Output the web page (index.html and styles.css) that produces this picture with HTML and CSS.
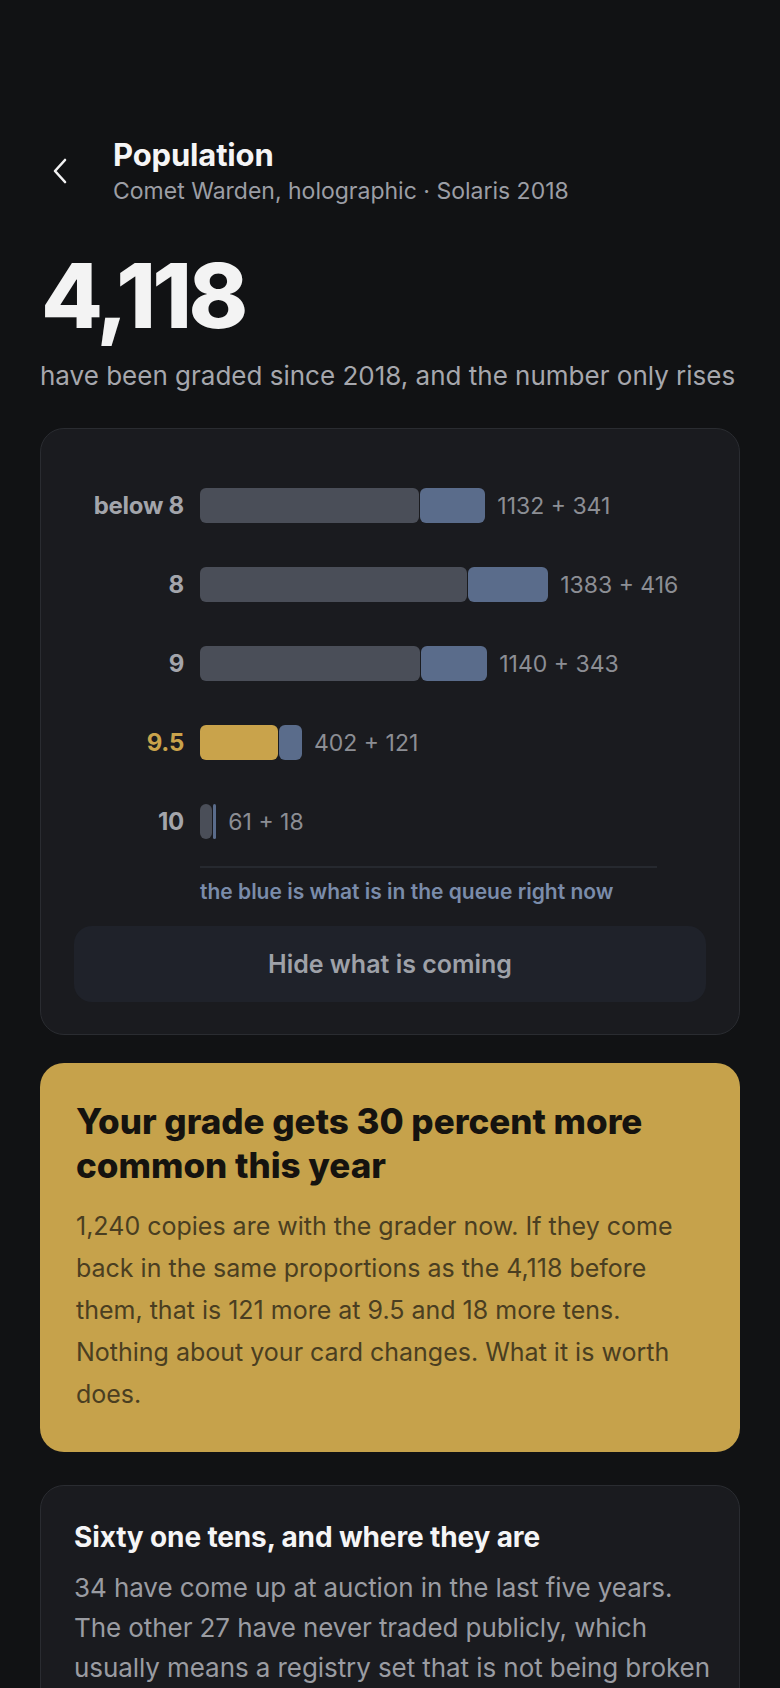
FILE: index.html
```html
<!DOCTYPE html>
<html lang="en">
<head>
<meta charset="utf-8">
<title>Population</title>
<link rel="stylesheet" href="styles.css">
</head>
<body>
<main class="page">
  <header class="header">
    <button class="back" aria-label="Back">
      <svg width="16" height="26" viewBox="0 0 16 26" fill="none"><path d="M13 2 L3 13 L13 24" stroke="#f2f2f3" stroke-width="2.6" stroke-linecap="round" stroke-linejoin="round"/></svg>
    </button>
    <div class="titles">
      <h1 class="title">Population</h1>
      <p class="subtitle">Comet Warden, holographic · Solaris 2018</p>
    </div>
  </header>

  <section class="hero">
    <div class="big">4,118</div>
    <p class="lead">have been graded since 2018, and the number only rises</p>
  </section>

  <section class="card chart-card">
    <div class="chart">
      <div class="row">
        <span class="label">below 8</span>
        <div class="bar">
          <span class="seg gray" style="width:218.5px"></span>
          <span class="seg blue" style="width:65.8px"></span>
          <span class="count">1132 + 341</span>
        </div>
      </div>
      <div class="row">
        <span class="label">8</span>
        <div class="bar">
          <span class="seg gray" style="width:266.9px"></span>
          <span class="seg blue" style="width:80.3px"></span>
          <span class="count">1383 + 416</span>
        </div>
      </div>
      <div class="row">
        <span class="label">9</span>
        <div class="bar">
          <span class="seg gray" style="width:220px"></span>
          <span class="seg blue" style="width:66.2px"></span>
          <span class="count">1140 + 343</span>
        </div>
      </div>
      <div class="row">
        <span class="label gold-text">9.5</span>
        <div class="bar">
          <span class="seg gold" style="width:77.6px"></span>
          <span class="seg blue" style="width:23.4px"></span>
          <span class="count">402 + 121</span>
        </div>
      </div>
      <div class="row">
        <span class="label">10</span>
        <div class="bar">
          <span class="seg gray" style="width:11.8px"></span>
          <span class="seg blue thin" style="width:3.5px"></span>
          <span class="count">61 + 18</span>
        </div>
      </div>
    </div>
    <div class="legend-wrap">
      <div class="divider"></div>
      <p class="legend">the blue is what is in the queue right now</p>
    </div>
    <button class="toggle">Hide what is coming</button>
  </section>

  <section class="callout">
    <h2 class="callout-title">Your grade gets 30 percent more common this year</h2>
    <p class="callout-body">1,240 copies are with the grader now. If they come back in the same proportions as the 4,118 before them, that is 121 more at 9.5 and 18 more tens. Nothing about your card changes. What it is worth does.</p>
  </section>

  <section class="card info-card">
    <h3 class="info-title">Sixty one tens, and where they are</h3>
    <p class="info-body">34 have come up at auction in the last five years. The other 27 have never traded publicly, which usually means a registry set that is not being broken up. When one of those sets comes apart, several tens reach the market at once.</p>
  </section>
</main>
</body>
</html>
```

FILE: styles.css
```css
* { box-sizing: border-box; }

html, body {
  margin: 0;
  padding: 0;
  background: #111214;
}

body {
  font-family: Inter, "Noto Sans", "Liberation Sans", sans-serif;
  color: #f2f2f3;
  -webkit-font-smoothing: antialiased;
}

.page {
  padding: 137px 40px 40px;
}

/* Header */
.header {
  display: flex;
  align-items: center;
  gap: 33px;
}

.back {
  width: 40px;
  height: 40px;
  padding: 0;
  border: 0;
  background: transparent;
  display: flex;
  align-items: center;
  justify-content: center;
}

.titles {
  display: flex;
  flex-direction: column;
  gap: 4px;
}

.title {
  margin: 0;
  font-size: 31px;
  line-height: 36px;
  font-weight: 700;
  letter-spacing: -0.005em;
  color: #f5f5f6;
}

.subtitle {
  margin: 0;
  font-size: 23px;
  line-height: 28px;
  font-weight: 400;
  color: #9c9ea5;
}

/* Hero */
.hero {
  margin-top: 46px;
}

.big {
  font-size: 90px;
  line-height: 90px;
  font-weight: 800;
  letter-spacing: -0.04em;
  color: #f3f3f3;
  margin-left: 1px;
}

.lead {
  margin: 19px 0 0;
  font-size: 26px;
  line-height: 32px;
  color: #a6a7ad;
}

/* Cards */
.card {
  background: #1a1b1f;
  border: 1px solid #2a2c31;
  border-radius: 24px;
}

.chart-card {
  margin-top: 36px;
  padding: 59px 33px 32px;
}

.chart {
  display: flex;
  flex-direction: column;
  gap: 44px;
}

.row {
  display: grid;
  grid-template-columns: 110px 1fr;
  column-gap: 16px;
  align-items: center;
  height: 35px;
}

.label {
  text-align: right;
  font-size: 24px;
  font-weight: 700;
  color: #a3a5ab;
  letter-spacing: -0.01em;
}

.gold-text { color: #c9a34b; }

.bar {
  display: flex;
  align-items: center;
  height: 35px;
}

.seg {
  display: block;
  height: 35px;
  border-radius: 6px;
  flex: none;
}

.seg + .seg { margin-left: 1px; }

.gray { background: #4a4e58; }
.blue { background: #5a6c8b; }
.gold { background: #c9a34b; }
.thin { border-radius: 2px; }

.count {
  margin-left: 12px;
  font-size: 23px;
  font-weight: 400;
  color: #8c8e94;
  white-space: nowrap;
}

.legend-wrap {
  margin: 27px 49px 0 126px;
}

.divider {
  height: 2px;
  background: #26292f;
}

.legend {
  margin: 11px 0 0;
  font-size: 21px;
  line-height: 26px;
  font-weight: 600;
  color: #7a8caa;
  white-space: nowrap;
}

.toggle {
  display: block;
  width: 100%;
  height: 76px;
  margin-top: 21px;
  border: 0;
  border-radius: 18px;
  background: #1f222a;
  font-family: inherit;
  font-size: 25px;
  font-weight: 600;
  color: #9ea1a8;
}

/* Callout */
.callout {
  margin-top: 28px;
  background: #c6a24b;
  border-radius: 24px;
  padding: 36px 36px 37px;
}

.callout-title {
  margin: 0;
  font-size: 35px;
  line-height: 44px;
  font-weight: 800;
  letter-spacing: 0;
  color: #15130f;
}

.callout-body {
  margin: 18px 0 0;
  font-size: 25px;
  line-height: 42px;
  color: #4a3e21;
}

/* Info card */
.info-card {
  margin-top: 33px;
  padding: 34px 18px 34px 33px;
}

.info-title {
  margin: 0;
  font-size: 28px;
  line-height: 34px;
  font-weight: 700;
  letter-spacing: -0.005em;
  color: #f5f5f6;
}

.info-body {
  margin: 13.5px 0 0;
  font-size: 26px;
  line-height: 40px;
  letter-spacing: -0.003em;
  color: #9a9ca2;
}
```
